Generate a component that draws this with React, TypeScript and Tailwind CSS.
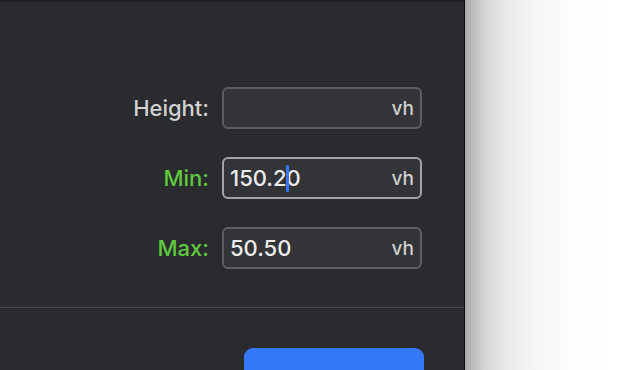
import React from "react";

function Field({ value, focused, cursorAfter }: { value: string; focused?: boolean; cursorAfter?: string }) {
  return (
    <div
      className={`relative flex h-[42px] w-[200px] items-center rounded-[6px] border-2 bg-[#333437] pl-[6px] pr-[6px] ${
        focused ? "border-[#a3a3a5]" : "border-[#5d5e61]"
      }`}
    >
      <div className="flex-1 text-[22px] font-medium leading-none text-[#ececec]">
        {cursorAfter !== undefined ? (
          <>
            {cursorAfter}
            <span className="relative inline-block w-0">
              <span className="absolute left-[-1px] top-[-21px] h-[27px] w-[3px] rounded-[1px] bg-[#3478f6]" />
            </span>
            {value.slice(cursorAfter.length)}
          </>
        ) : (
          value
        )}
      </div>
      <span className="text-[19px] font-medium leading-none text-[#cfcfcf]">vh</span>
    </div>
  );
}

export default function App() {
  return (
    <div
      className="flex h-[370px] w-[638px] overflow-hidden"
      style={{ fontFamily: "Inter, 'Noto Sans', sans-serif" }}
    >
      <div className="flex w-[464px] shrink-0 flex-col bg-[#2a2b2e]">
        <div className="h-[2px] shrink-0 bg-[#1f2022]" />
        <div className="flex h-[305px] shrink-0 flex-col items-end pr-[42px] pt-[85px]">
          <div className="grid grid-cols-[auto_200px] items-center gap-x-[13px] gap-y-[28px]">
            <span className="text-right text-[22px] font-medium leading-none text-[#d2d2d2]">Height:</span>
            <Field value="" />
            <span className="text-right text-[22px] font-medium leading-none text-[#5fc83f]">Min:</span>
            <Field value="150.20" focused cursorAfter="150.2" />
            <span className="text-right text-[22px] font-medium leading-none text-[#5fc83f]">Max:</span>
            <Field value="50.50" />
          </div>
        </div>
        <div className="h-px shrink-0 bg-[#4a4b4e]" />
        <div className="flex flex-1 justify-end pr-[40px] pt-[40px]">
          <div className="h-[40px] w-[180px] shrink-0 rounded-t-[9px] bg-[#3478f6]" />
        </div>
      </div>
      <div className="w-px shrink-0 bg-[#0e0e0f]" />
      <div className="flex-1 bg-[linear-gradient(to_right,#a9a9a9_0px,#d6d6d6_20px,#ececec_45px,#f7f7f7_75px,#fdfdfd_110px,#ffffff_150px)]" />
    </div>
  );
}
